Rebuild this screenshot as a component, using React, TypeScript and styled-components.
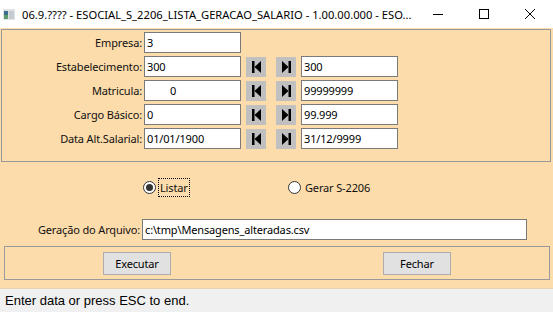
import React from 'react';
import styled, { createGlobalStyle } from 'styled-components';

const GlobalStyle = createGlobalStyle`
  html, body {
    margin: 0;
    padding: 0;
    background: #ffffff;
  }
  body {
    font-family: "Noto Sans", "DejaVu Sans", sans-serif;
    font-size: 11px;
    letter-spacing: -0.15px;
    color: #000;
  }
`;

const Window = styled.div`
  width: 553px;
  height: 312px;
  display: flex;
  flex-direction: column;
  overflow: hidden;
`;

const TitleBar = styled.div`
  height: 28px;
  display: flex;
  align-items: center;
  background: #ffffff;
  flex-shrink: 0;
`;

const AppIcon = styled.div`
  width: 22px;
  flex-shrink: 0;
  display: flex;
  padding-left: 3px;
  box-sizing: border-box;
`;

const Title = styled.div`
  flex: 1;
  min-width: 0;
  font-size: 11.2px;
  letter-spacing: 0;
  white-space: nowrap;
  color: #000;
`;

const Controls = styled.div`
  display: flex;
  height: 28px;
  flex-shrink: 0;
`;

const ControlBtn = styled.div`
  width: 46px;
  display: flex;
  align-items: center;
  justify-content: center;
`;

const Body = styled.div`
  flex: 1;
  background: #fddcab;
  display: flex;
  flex-direction: column;
`;

const Frame = styled.div`
  margin: 1px 2px 0 1px;
  border: 1px solid #9a9a9a;
  padding: 2px 0 12px 0;
  display: flex;
  flex-direction: column;
  gap: 3px;
`;

const Row = styled.div`
  display: flex;
  align-items: center;
  height: 21px;
`;

const Label = styled.div<{ $w?: number }>`
  width: ${(p) => p.$w ?? 140}px;
  margin-right: 2px;
  text-align: right;
  white-space: nowrap;
  color: #111;
`;

const Field = styled.div<{ $w?: number; $indent?: number }>`
  width: ${(p) => p.$w ?? 97}px;
  height: 21px;
  box-sizing: border-box;
  border: 1px solid #7a7a7a;
  background: #fff;
  padding-left: ${(p) => p.$indent ?? 2}px;
  display: flex;
  align-items: center;
  white-space: nowrap;
  color: #000;
`;

const NavBtn = styled.div<{ $ml: number }>`
  width: 20px;
  height: 20px;
  margin-left: ${(p) => p.$ml}px;
  background: #c0c0c0;
  display: flex;
  align-items: center;
  justify-content: center;
`;

const RadioRow = styled.div`
  display: flex;
  align-items: center;
  height: 20px;
  margin-top: 15px;
  padding-left: 143px;
`;

const RadioItem = styled.div<{ $w?: number }>`
  display: flex;
  align-items: center;
  width: ${(p) => (p.$w ? `${p.$w}px` : 'auto')};
`;

const RadioCircle = styled.div<{ $on?: boolean }>`
  width: 13px;
  height: 13px;
  box-sizing: border-box;
  border-radius: 50%;
  border: 1px solid #333;
  background: #fff;
  display: flex;
  align-items: center;
  justify-content: center;
  margin-right: 2px;
  &::after {
    content: '';
    display: ${(p) => (p.$on ? 'block' : 'none')};
    width: 7px;
    height: 7px;
    border-radius: 50%;
    background: #333;
  }
`;

const RadioText = styled.span<{ $focus?: boolean }>`
  padding: 1px 1px;
  border: 1px dotted ${(p) => (p.$focus ? '#000' : 'transparent')};
  color: #111;
`;

const FileRow = styled(Row)`
  margin-top: 22px;
`;

const ButtonFrame = styled.div`
  margin: 6px 3px 0 4px;
  height: 34px;
  box-sizing: border-box;
  border: 1px solid #9a9a9a;
  display: flex;
  align-items: center;
  padding-left: 98px;
  gap: 212px;
`;

const Button = styled.div`
  width: 68px;
  height: 23px;
  box-sizing: border-box;
  border: 1px solid #adadad;
  background: #e1e1e1;
  display: flex;
  align-items: center;
  justify-content: center;
  color: #000;
`;

const StatusBar = styled.div`
  height: 24px;
  flex-shrink: 0;
  background: #f0f0f0;
  border-top: 1px solid #e4d2b4;
  box-sizing: border-box;
  display: flex;
  align-items: center;
  padding-left: 5px;
  font-family: "Liberation Sans", Arial, sans-serif;
  font-size: 13px;
  letter-spacing: 0;
  color: #000;
`;

function FirstIcon() {
  return (
    <svg width="9" height="12" viewBox="0 0 9 12">
      <rect x="0" y="0" width="2.5" height="12" fill="#000" />
      <polygon points="9,0 9,12 2.5,6" fill="#000" />
    </svg>
  );
}

function LastIcon() {
  return (
    <svg width="9" height="12" viewBox="0 0 9 12">
      <polygon points="0,0 0,12 6.5,6" fill="#000" />
      <rect x="6.5" y="0" width="2.5" height="12" fill="#000" />
    </svg>
  );
}

const rangeRows = [
  { label: 'Estabelecimento:', from: '300', to: '300', indent: 2 },
  { label: 'Matricula:', from: '0', to: '99999999', indent: 25 },
  { label: 'Cargo Básico:', from: '0', to: '99.999', indent: 2 },
  { label: 'Data Alt.Salarial:', from: '01/01/1900', to: '31/12/9999', indent: 2 },
];

export default function App() {
  return (
    <>
      <GlobalStyle />
      <Window>
        <TitleBar>
          <AppIcon>
            <svg width="12" height="11" viewBox="0 0 12 11">
              <rect x="0" y="0" width="12" height="11" fill="#dfe3e6" />
              <rect x="1" y="2" width="4" height="8" fill="#3b6e8f" />
              <rect x="1" y="6" width="4" height="4" fill="#5e9b6a" />
              <rect x="6" y="2" width="5" height="8" fill="#c5cbd0" />
            </svg>
          </AppIcon>
          <Title>06.9.???? - ESOCIAL_S_2206_LISTA_GERACAO_SALARIO - 1.00.00.000 - ESO...</Title>
          <Controls>
            <ControlBtn>
              <svg width="10" height="10" viewBox="0 0 10 10">
                <line x1="0" y1="5.5" x2="10" y2="5.5" stroke="#000" strokeWidth="1" />
              </svg>
            </ControlBtn>
            <ControlBtn>
              <svg width="10" height="10" viewBox="0 0 10 10">
                <rect x="0.5" y="0.5" width="9" height="9" fill="none" stroke="#000" strokeWidth="1" />
              </svg>
            </ControlBtn>
            <ControlBtn>
              <svg width="10" height="10" viewBox="0 0 10 10">
                <path d="M0 0 L10 10 M10 0 L0 10" stroke="#000" strokeWidth="1" />
              </svg>
            </ControlBtn>
          </Controls>
        </TitleBar>
        <Body>
          <Frame>
            <Row>
              <Label>Empresa:</Label>
              <Field>3</Field>
            </Row>
            {rangeRows.map((r) => (
              <Row key={r.label}>
                <Label>{r.label}</Label>
                <Field $indent={r.indent}>{r.from}</Field>
                <NavBtn $ml={5}>
                  <FirstIcon />
                </NavBtn>
                <NavBtn $ml={10}>
                  <LastIcon />
                </NavBtn>
                <Field style={{ marginLeft: 5 }}>{r.to}</Field>
              </Row>
            ))}
          </Frame>
          <RadioRow>
            <RadioItem $w={145}>
              <RadioCircle $on />
              <RadioText $focus>Listar</RadioText>
            </RadioItem>
            <RadioItem>
              <RadioCircle />
              <RadioText>Gerar S-2206</RadioText>
            </RadioItem>
          </RadioRow>
          <FileRow>
            <Label $w={140}>Geração do Arquivo:</Label>
            <Field $w={385}>c:\tmp\Mensagens_alteradas.csv</Field>
          </FileRow>
          <ButtonFrame>
            <Button>Executar</Button>
            <Button>Fechar</Button>
          </ButtonFrame>
        </Body>
        <StatusBar>Enter data or press ESC to end.</StatusBar>
      </Window>
    </>
  );
}
